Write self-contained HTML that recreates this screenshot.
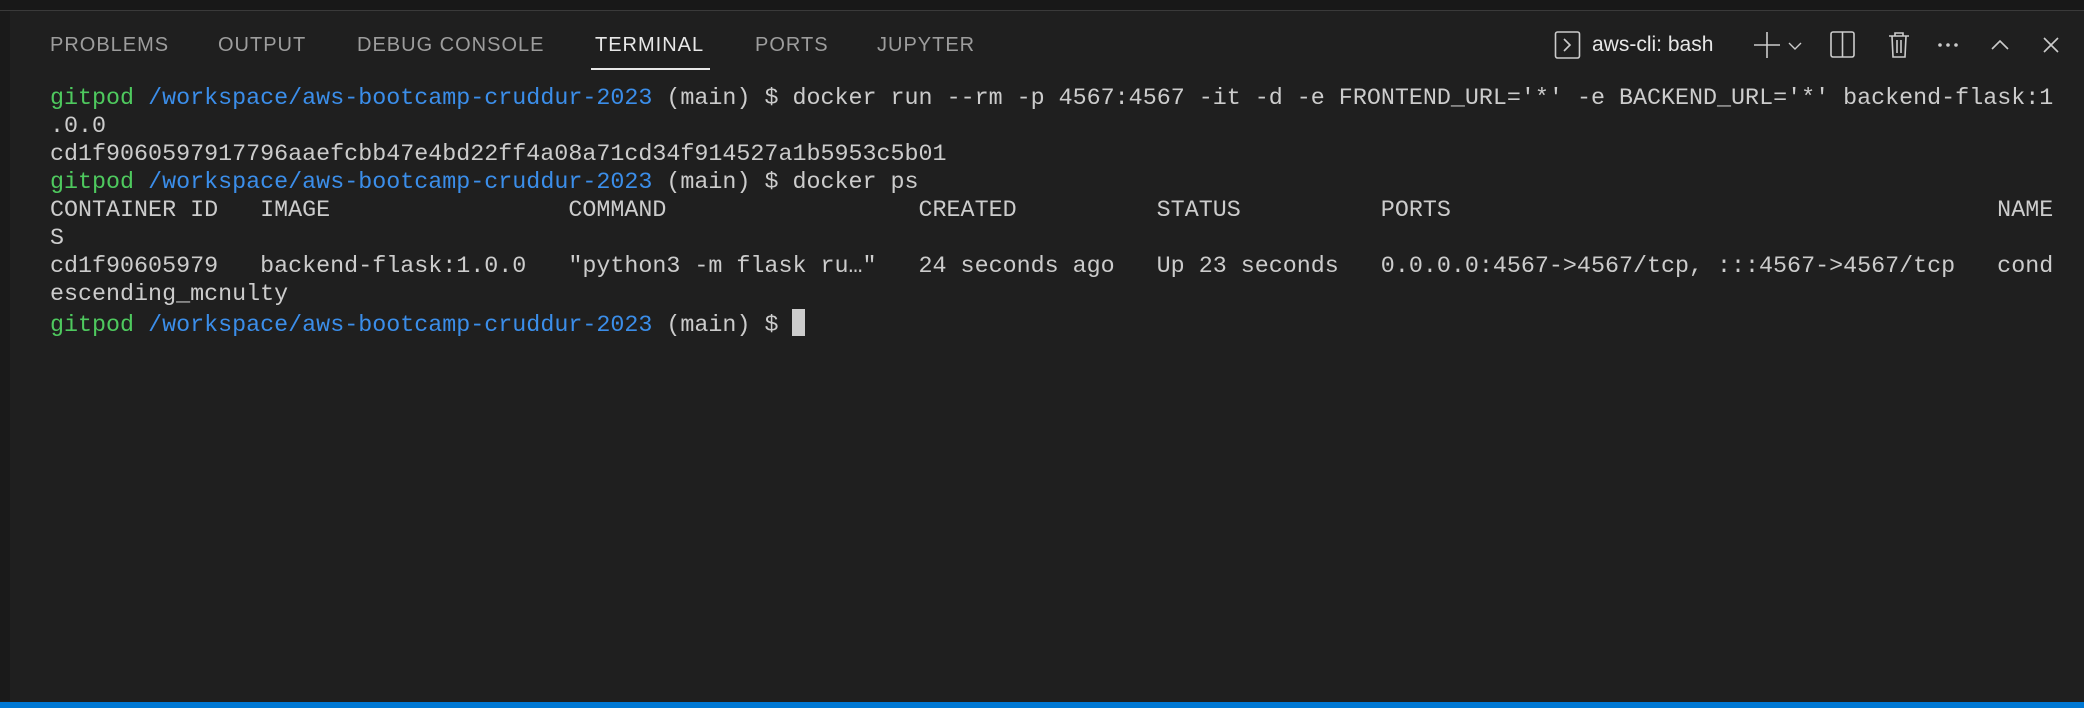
<!DOCTYPE html>
<html><head><meta charset="utf-8"><style>
html,body{margin:0;padding:0;}
body{width:2084px;height:708px;background:#1f1f1f;position:relative;overflow:hidden;font-family:"Liberation Sans",sans-serif;}
.top{position:absolute;left:0;top:0;width:2084px;height:10px;background:#181818;border-bottom:1px solid #3a3a3a;}
.tab{position:absolute;top:32px;font-size:20px;letter-spacing:1px;color:#9d9d9d;line-height:26px;}
.tab.act{color:#e7e7e7;}
.ul{position:absolute;left:591px;top:68px;width:119px;height:2px;background:#e7e7e7;}
pre{position:absolute;left:50px;top:85px;margin:0;font-family:"Liberation Mono",monospace;font-size:23.35px;line-height:28px;color:#cccccc;}
.g{color:#4ec95e;}
.b{color:#3b8eea;}
.cur{display:inline-block;width:13px;height:27px;background:#cccccc;vertical-align:-5px;}
.bar{position:absolute;left:0;bottom:0;width:2084px;height:6px;background:#0078d4;}
.ic{position:absolute;top:30px;}
.left{position:absolute;left:0;top:11px;width:10px;height:690px;background:#1a1a1a;}
</style></head><body>
<div class="top"></div>
<div class="left"></div>
<div class="tab" style="left:50px">PROBLEMS</div>
<div class="tab" style="left:218px">OUTPUT</div>
<div class="tab" style="left:357px">DEBUG CONSOLE</div>
<div class="tab act" style="left:595px">TERMINAL</div>
<div class="tab" style="left:755px">PORTS</div>
<div class="tab" style="left:877px">JUPYTER</div>
<div class="ul"></div>

<svg class="ic" style="left:1554px" width="28" height="30" viewBox="0 0 28 30"><rect x="1.5" y="2" width="24" height="26" rx="2" fill="none" stroke="#ccc" stroke-width="1.6"/><path d="M10 9 L16 15 L10 21" fill="none" stroke="#ccc" stroke-width="1.6"/></svg>
<div class="tab act" style="left:1592px;letter-spacing:0;font-size:21px">aws-cli: bash</div>
<svg class="ic" style="left:1754px" width="110" height="30" viewBox="0 0 110 30"><path d="M13 2 V28 M0 15 H26" stroke="#ccc" stroke-width="1.6"/><path d="M35 13 L41 19 L47 13" fill="none" stroke="#ccc" stroke-width="1.4"/><rect x="77" y="2" width="23" height="25" rx="2" fill="none" stroke="#ccc" stroke-width="1.6"/><path d="M88.5 2 V27" stroke="#ccc" stroke-width="1.6"/></svg>
<svg class="ic" style="left:1885px" width="30" height="30" viewBox="0 0 30 30"><path d="M4 6 H24 M10 6 V3 H18 V6 M7 6 L8 27 H20 L21 6 M12 10 V23 M16 10 V23" fill="none" stroke="#ccc" stroke-width="1.6"/></svg>
<svg class="ic" style="left:1936px" width="130" height="30" viewBox="0 0 130 30"><circle cx="4" cy="15" r="1.8" fill="#ccc"/><circle cx="12" cy="15" r="1.8" fill="#ccc"/><circle cx="20" cy="15" r="1.8" fill="#ccc"/><path d="M56 19 L64 11 L72 19" fill="none" stroke="#ccc" stroke-width="1.6"/><path d="M108 8 L122 22 M122 8 L108 22" stroke="#ccc" stroke-width="1.6"/></svg>

<pre><span class="g">gitpod</span> <span class="b">/workspace/aws-bootcamp-cruddur-2023</span> (main) $ docker run --rm -p 4567:4567 -it -d -e FRONTEND_URL='*' -e BACKEND_URL='*' backend-flask:1
.0.0
cd1f9060597917796aaefcbb47e4bd22ff4a08a71cd34f914527a1b5953c5b01
<span class="g">gitpod</span> <span class="b">/workspace/aws-bootcamp-cruddur-2023</span> (main) $ docker ps
CONTAINER ID   IMAGE                 COMMAND                  CREATED          STATUS          PORTS                                       NAME
S
cd1f90605979   backend-flask:1.0.0   "python3 -m flask ru…"   24 seconds ago   Up 23 seconds   0.0.0.0:4567->4567/tcp, :::4567->4567/tcp   cond
escending_mcnulty
<span class="g">gitpod</span> <span class="b">/workspace/aws-bootcamp-cruddur-2023</span> (main) $ <span class="cur"></span></pre>
<div class="bar"></div>
</body></html>
